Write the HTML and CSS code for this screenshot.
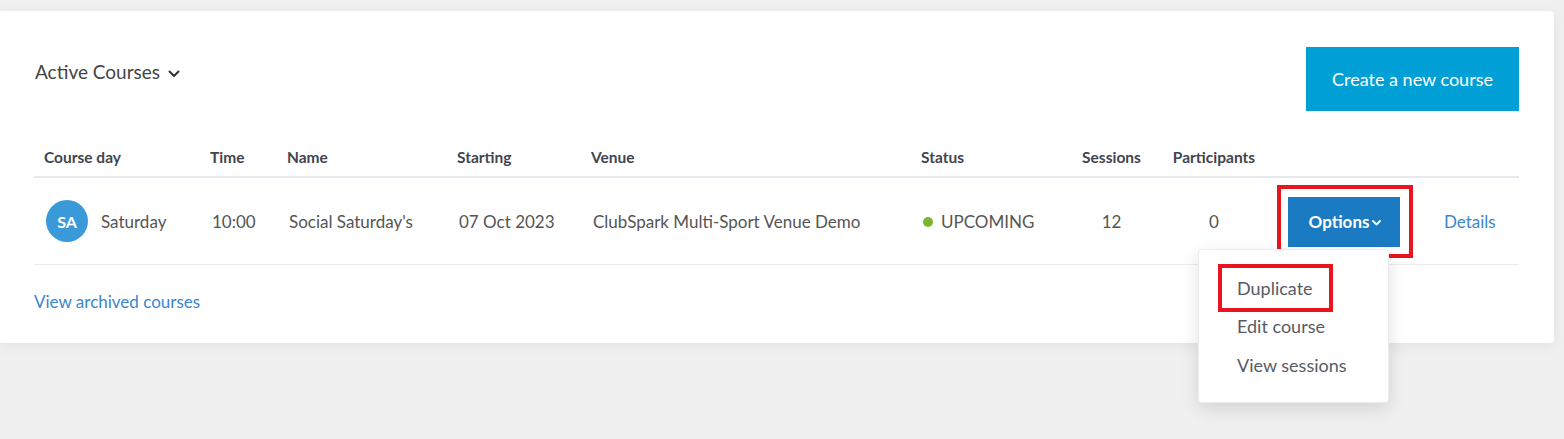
FILE: index.html
```html
<!DOCTYPE html>
<html lang="en">
<head>
<meta charset="utf-8">
<title>Active Courses</title>
<link rel="stylesheet" href="styles.css">
</head>
<body>
<div class="page">
  <div class="card">
    <div class="card-head">
      <button class="filter" type="button">Active Courses
        <svg class="filter-chev" width="12" height="8" viewBox="0 0 12 8"><path d="M1.5 1.5 L6 6 L10.5 1.5" fill="none" stroke="#333" stroke-width="2" stroke-linecap="round" stroke-linejoin="round"/></svg>
      </button>
      <button class="create" type="button">Create a new course</button>
    </div>
    <table class="courses">
      <colgroup>
        <col class="c-day"><col class="c-time"><col class="c-name"><col class="c-start"><col class="c-venue"><col class="c-status"><col class="c-sess"><col class="c-part"><col class="c-opt"><col class="c-det">
      </colgroup>
      <thead>
        <tr>
          <th>Course day</th>
          <th>Time</th>
          <th>Name</th>
          <th>Starting</th>
          <th>Venue</th>
          <th>Status</th>
          <th class="center">Sessions</th>
          <th class="center">Participants</th>
          <th></th>
          <th></th>
        </tr>
      </thead>
      <tbody>
        <tr>
          <td><span class="day"><span class="avatar">SA</span>Saturday</span></td>
          <td>10:00</td>
          <td>Social Saturday's</td>
          <td>07 Oct 2023</td>
          <td>ClubSpark Multi-Sport Venue Demo</td>
          <td><span class="status"><span class="dot"></span>UPCOMING</span></td>
          <td class="center">12</td>
          <td class="center">0</td>
          <td class="opt-cell">
            <span class="highlight">
              <button class="options" type="button">Options<svg class="opt-chev" width="9" height="6" viewBox="0 0 9 6"><path d="M1 1 L4.5 4.5 L8 1" fill="none" stroke="#fff" stroke-width="1.8" stroke-linecap="round" stroke-linejoin="round"/></svg></button>
              <ul class="menu">
                <li class="menu-item"><span class="highlight-item">Duplicate</span></li>
                <li class="menu-item">Edit course</li>
                <li class="menu-item">View sessions</li>
              </ul>
            </span>
          </td>
          <td class="det-cell"><a class="link" href="#">Details</a></td>
        </tr>
      </tbody>
    </table>
    <a class="link archived" href="#">View archived courses</a>
  </div>
</div>
</body>
</html>
```
FILE: styles.css
```css
* { box-sizing: border-box; }
html, body { margin: 0; padding: 0; }
body {
  background: #f0f0f0;
  font-family: Lato, "Open Sans", Arial, sans-serif;
  color: #555;
  width: 1564px;
  height: 439px;
  overflow: hidden;
}
.page { padding-top: 11px; }
.card {
  width: 1554px;
  background: #fff;
  border-radius: 0 4px 4px 0;
  box-shadow: 0 3px 14px rgba(0,0,0,0.06);
  padding: 36px 35px 32px 34px;
  height: 332px;
}
.card-head {
  display: flex;
  justify-content: space-between;
  align-items: flex-start;
}
.filter {
  margin-top: 13px;
  margin-left: 1px;
  padding: 0;
  border: 0;
  background: none;
  font-family: inherit;
  font-size: 19px;
  line-height: 24px;
  color: #444;
  display: flex;
  align-items: center;
  gap: 8px;
  cursor: pointer;
}
.filter-chev { margin-top: 3px; }
.create {
  width: 213px;
  height: 64px;
  border: 0;
  background: #009fd6;
  color: #fff;
  font-family: inherit;
  font-size: 18px;
  padding: 0;
  cursor: pointer;
}
.courses {
  margin-top: 27px;
  width: 1485px;
  table-layout: fixed;
  border-collapse: separate;
  border-spacing: 0;
}
.c-day { width: 166px; }
.c-time { width: 77px; }
.c-name { width: 170px; }
.c-start { width: 134px; }
.c-venue { width: 330px; }
.c-status { width: 161px; }
.c-sess { width: 79px; }
.c-part { width: 126px; }
.c-opt { width: 132px; }
.c-det { width: 110px; }
.courses th {
  height: 40px;
  padding: 0 0 0 10px;
  text-align: left;
  font-size: 15.5px;
  font-weight: 700;
  color: #42454f;
  border-bottom: 2px solid #e8e8ef;
  white-space: nowrap;
}
.courses td {
  height: 87px;
  padding: 0 0 0 12px;
  font-size: 17px;
  color: #555;
  border-bottom: 1px solid #ebebeb;
  white-space: nowrap;
}
.courses th.center, .courses td.center { text-align: center; padding: 0; }
.day { display: inline-flex; align-items: center; gap: 13px; }
.avatar {
  width: 42px;
  height: 42px;
  border-radius: 50%;
  background: #3a9ad9;
  color: #fff;
  font-weight: 700;
  font-size: 16px;
  display: inline-flex;
  align-items: center;
  justify-content: center;
}
.status { display: inline-flex; align-items: center; gap: 8px; }
.dot { width: 10px; height: 10px; border-radius: 50%; background: #7ab72e; }
.courses td.opt-cell { padding: 0; text-align: center; }
.highlight {
  position: relative;
  display: inline-block;
  border: 4px solid #e8141f;
  padding: 8px 9px 7px 7px;
  vertical-align: middle;
}
.options {
  display: flex;
  align-items: center;
  justify-content: center;
  gap: 3px;
  width: 112px;
  height: 50px;
  border: 0;
  padding: 0 0 0 2px;
  background: #1b7bc2;
  color: #fff;
  font-family: inherit;
  font-weight: 700;
  font-size: 17px;
  cursor: pointer;
}
.opt-chev { margin-top: 3px; }
.menu {
  position: absolute;
  top: 60px;
  left: -83px;
  width: 191px;
  height: 154px;
  margin: 0;
  padding: 19px 0;
  list-style: none;
  background: #fff;
  border-radius: 4px;
  border: 1px solid #ececec;
  box-shadow: 0 6px 18px rgba(0,0,0,0.12);
  text-align: left;
  z-index: 5;
}
.menu-item {
  height: 38.5px;
  display: flex;
  align-items: center;
  padding-left: 38px;
  font-size: 18px;
  color: #585b64;
  white-space: nowrap;
}
.highlight-item {
  display: inline-block;
  border: 4px solid #e8141f;
  line-height: 40px;
  padding: 0 16px 0 15px;
  margin-left: -19px;
}
.courses td.det-cell { padding-left: 35px; }
.link {
  color: #3b86cf;
  text-decoration: none;
  font-size: 17px;
}
.archived {
  display: inline-block;
  margin-top: 27px;
  line-height: 20px;
}
```
